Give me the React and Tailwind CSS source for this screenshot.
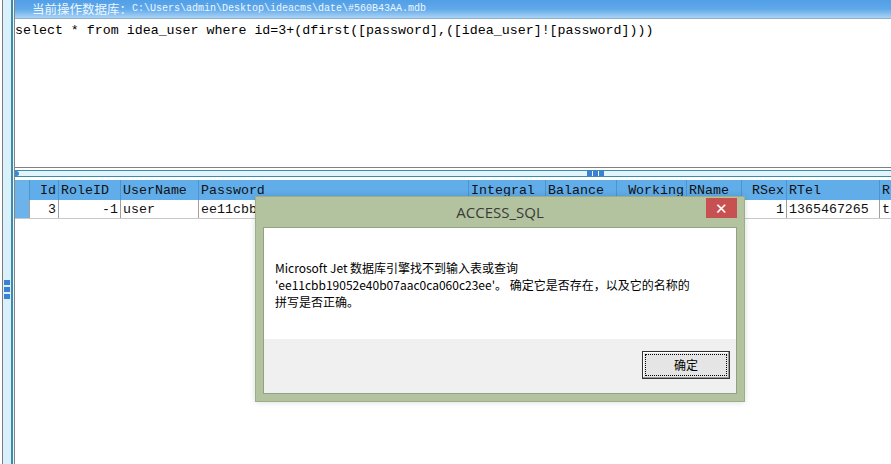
import React from 'react';

// Grid columns of the result set (widths include the 1px right rule)
const columns = [
  { name: 'Id', w: 29, head: 'right', cell: 'right', value: '3' },
  { name: 'RoleID', w: 62, head: 'left', cell: 'right', value: '-1' },
  { name: 'UserName', w: 78, head: 'left', cell: 'left', value: 'user' },
  { name: 'Password', w: 270, head: 'left', cell: 'left', value: 'ee11cbb' },
  { name: 'Integral', w: 77, head: 'left', cell: 'right', value: '' },
  { name: 'Balance', w: 71, head: 'left', cell: 'right', value: '' },
  { name: 'Working', w: 70, head: 'right', cell: 'right', value: '' },
  { name: 'RName', w: 55, head: 'left', cell: 'left', value: '' },
  { name: 'RSex', w: 45, head: 'right', cell: 'right', value: '1' },
  { name: 'RTel', w: 93, head: 'left', cell: 'left', value: '1365467265' },
  { name: 'R', w: 120, head: 'left', cell: 'left', value: 't' },
];

const mono = { fontFamily: '"Liberation Mono", "DejaVu Sans Mono", monospace' };

const LeftStrip = () => (
  <div className="relative flex h-full w-[14px] shrink-0">
    <div className="w-[2px] bg-white" />
    <div className="w-[1px] bg-[#7d7d7d]" />
    <div className="flex w-[8px] flex-col justify-center bg-[#d9f1fb]">
      <div className="mt-[114px] flex flex-col gap-[2px] px-[1px]">
        <div className="h-[5px] bg-[#3b7fd6]" />
        <div className="h-[5px] bg-[#3b7fd6]" />
        <div className="h-[5px] bg-[#3b7fd6]" />
      </div>
    </div>
    <div className="w-[2px] bg-[#3d8aa9]" />
    <div className="w-[1px] bg-[#e6f6fc]" />
  </div>
);

const Splitter = () => (
  <div className="flex h-[7px] items-center border-y border-[#3d8aa9] bg-[#e3f5fc]">
    <div className="h-[5px] w-[4px] rounded-r-full bg-[#3b8ad6]" />
    <div className="ml-[568px] flex gap-[1px]">
      <div className="h-[5px] w-[5px] bg-[#3b7fd6]" />
      <div className="h-[5px] w-[5px] bg-[#3b7fd6]" />
      <div className="h-[5px] w-[5px] bg-[#3b7fd6]" />
    </div>
  </div>
);

const Grid = () => (
  <div className="text-[13.3px] leading-none text-[#111]" style={mono}>
    <div className="flex h-[20px] bg-[#60adea]">
      <div className="w-[15px] shrink-0 border-r border-[#4d93d0] bg-[#6cb3ec]" />
      {columns.map((c) => (
        <div
          key={c.name}
          className={`flex shrink-0 items-center border-r border-[#4d93d0] px-[2px] pt-[2px] ${c.head === 'right' ? 'justify-end' : 'justify-start'}`}
          style={{ width: c.w }}
        >
          {c.name}
        </div>
      ))}
    </div>
    <div className="flex h-[19px] border-b border-[#c8c8c8] bg-white">
      <div className="w-[15px] shrink-0 border-r border-[#a0a0a0] bg-[#6cb3ec]" />
      {columns.map((c) => (
        <div
          key={c.name}
          className={`flex shrink-0 items-center overflow-hidden whitespace-nowrap border-r border-[#a0a0a0] px-[2px] pt-[2px] ${c.cell === 'right' ? 'justify-end' : 'justify-start'}`}
          style={{ width: c.w }}
        >
          {c.value}
        </div>
      ))}
    </div>
  </div>
);

const MessageBox = () => (
  <div className="absolute left-[255px] top-[196px] flex h-[206px] w-[490px] flex-col border border-[#9cad8a] bg-[#b3c39f] px-[7px] pb-[7px] shadow-[0_0_6px_rgba(0,0,0,0.15)]">
    <div className="relative flex h-[30px] shrink-0 items-center justify-center">
      <span
        className="text-[15px] text-[#3a3a3a]"
        style={{ fontFamily: '"Open Sans", "Noto Sans", sans-serif' }}
      >
        ACCESS_SQL
      </span>
      <div className="absolute right-[0px] top-[1px] flex h-[20px] w-[31px] items-center justify-center bg-[#c75050] text-[15px] leading-none text-white">
        ✕
      </div>
    </div>
    <div
      className="flex flex-1 flex-col border border-[#93a382] text-[12px] text-black"
      style={{ fontFamily: '"Noto Sans CJK SC", "Noto Sans", sans-serif' }}
    >
      <div className="h-[111px] bg-white pl-[11px] pt-[31px] leading-[17px]">
        Microsoft Jet 数据库引擎找不到输入表或查询
        <br />
        'ee11cbb19052e40b07aac0ca060c23ee'。 确定它是否存在，以及它的名称的
        <br />
        拼写是否正确。
      </div>
      <div className="flex flex-1 items-start justify-end bg-[#f0f0f0] pr-[6px] pt-[12px]">
        <button className="h-[28px] w-[88px] border border-[#333] bg-[#e5e5e5] p-[2px] shadow-[inset_-1px_-1px_0_#9a9a9a,inset_1px_1px_0_#fff]">
          <span className="flex h-full w-full items-center justify-center border border-dotted border-black">
            确定
          </span>
        </button>
      </div>
    </div>
  </div>
);

export default function App() {
  return (
    <div className="relative flex h-[464px] w-[891px] overflow-hidden bg-white">
      <LeftStrip />
      <div className="flex min-w-0 flex-1 flex-col border-l border-[#858585]">
        {/* current database */}
        <div className="flex h-[19px] shrink-0 items-center border-b border-[#8fb2ca] bg-linear-to-b from-[#529fe7] via-[#5fa8ea] to-[#a9d3f5] pl-[17px] text-[#eef7ff]">
          <span
            className="text-[12.5px] leading-none"
            style={{ fontFamily: '"Noto Sans CJK SC", sans-serif' }}
          >
            当前操作数据库：
          </span>
          <span className="text-[10px] leading-none" style={mono}>
            C:\Users\admin\Desktop\ideacms\date\#560B43AA.mdb
          </span>
        </div>

        {/* SQL editor */}
        <div
          className="h-[149px] shrink-0 border-b border-[#808080] pt-[4px] text-[13.3px] leading-[16px] text-black"
          style={mono}
        >
          select * from idea_user where id=3+(dfirst([password],([idea_user]![password])))
        </div>

        <div className="h-[2px] shrink-0" />
        <Splitter />
        <div className="h-[3px] shrink-0" />

        {/* result grid */}
        <Grid />
      </div>

      <MessageBox />
    </div>
  );
}
